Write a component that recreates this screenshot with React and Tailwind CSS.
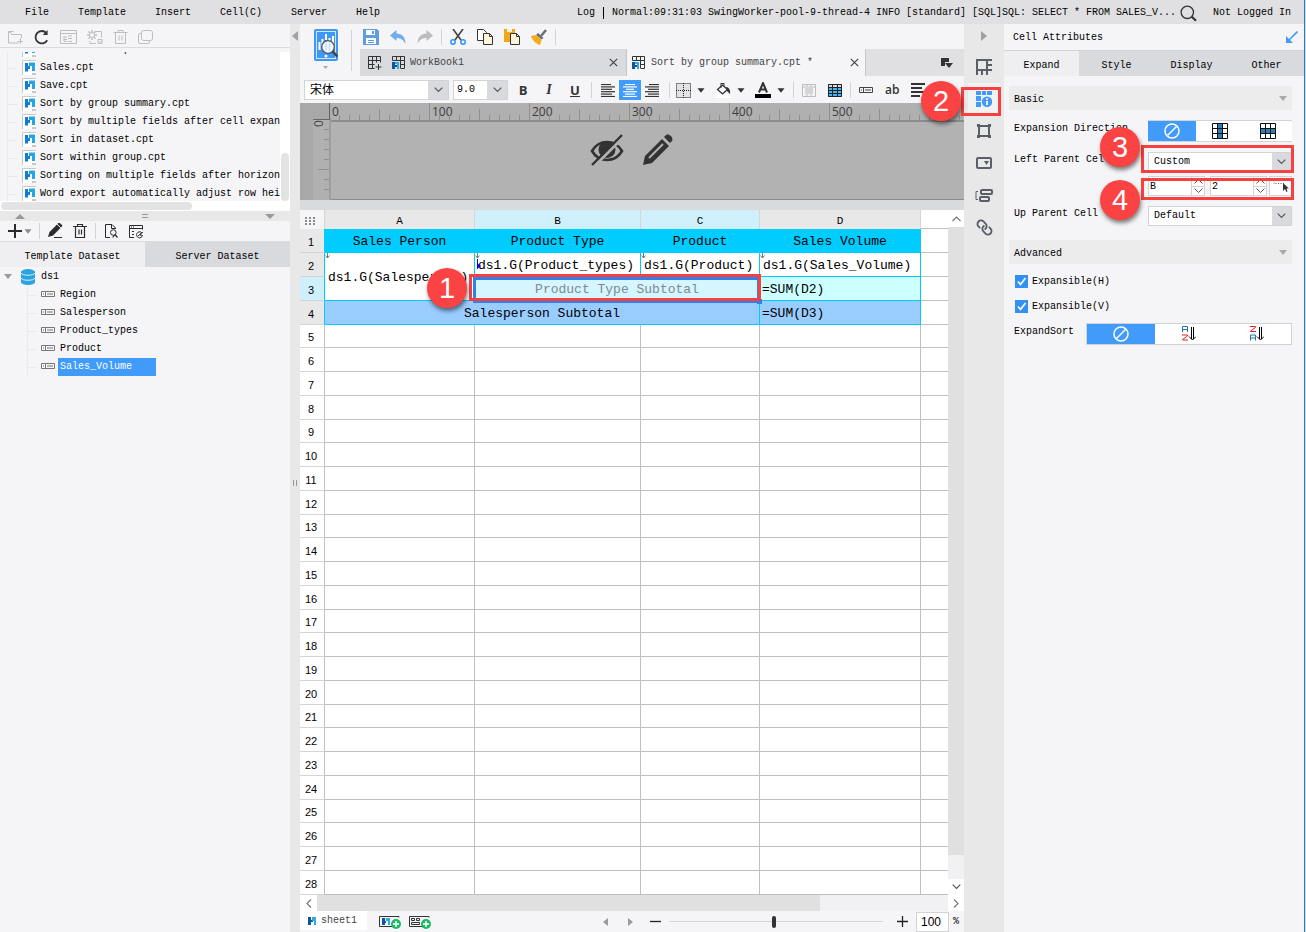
import { Fragment } from "react";
import { Link } from "lucide-react";

const mono = "font-['Liberation_Mono','Noto_Sans_CJK_SC',monospace]";

function Icon({ w = 16, h = 16, className = "", children }) {
  return (
    <svg width={w} height={h} viewBox={`0 0 ${w} ${h}`} fill="none" className={`shrink-0 ${className}`} aria-hidden="true">
      {children}
    </svg>
  );
}

const Chevron = () => (
  <Icon w={9} h={6}><path d="M.7.7 4.5 4.5 8.3.7" stroke="#555" strokeWidth="1.2" /></Icon>
);
const Caret = ({ color = "#333" }) => (
  <Icon w={8} h={5}><path d="M.5.3h7L4 4.7z" fill={color} /></Icon>
);
const Divider = ({ className = "h-4" }) => <span className={`w-px shrink-0 bg-[#d2d3d6] ${className}`} />;

function Badge({ n, className }) {
  return (
    <span className={`pointer-events-none absolute z-20 flex size-10 items-center justify-center rounded-full bg-[#fc4343] font-['Liberation_Sans',sans-serif] text-[29px] leading-none text-white shadow-[1px_3px_4px_rgba(0,0,0,0.5)] ${className}`}>
      {n}
    </span>
  );
}
const Frame = ({ className }) => (
  <span className={`pointer-events-none absolute z-10 border-3 border-[#fa3f3f] ${className}`} />
);

/* ---------- menu ---------- */
function MenuBar() {
  return (
    <header className="flex h-6 shrink-0 items-center overflow-hidden bg-[#e0e0e2] pt-0.5 pr-[13px] pl-[25px] whitespace-nowrap">
      <nav className="flex gap-[29px]">
        {["File", "Template", "Insert", "Cell(C)", "Server", "Help"].map((m) => (
          <button key={m}>{m}</button>
        ))}
      </nav>
      <div className="ml-auto flex items-center">
        <span>Log</span>
        <span className="mx-2 h-3 w-px bg-black" />
        <span>Normal:09:31:03 SwingWorker-pool-9-thread-4 INFO [standard] [SQL]SQL: SELECT * FROM SALES_V...</span>
        <button aria-label="Search" className="ml-1">
          <Icon w={17} h={17}>
            <circle cx="7.3" cy="7.3" r="6.2" stroke="#333" strokeWidth="1.3" />
            <path d="m11.8 11.8 4.2 4" stroke="#333" strokeWidth="2.2" />
          </Icon>
        </button>
        <button className="ml-4">Not Logged In</button>
      </div>
    </header>
  );
}

/* ---------- left panel ---------- */
const files = [
  "Out of order.cpt", "Sales.cpt", "Save.cpt", "Sort by group summary.cpt",
  "Sort by multiple fields after cell expansion.cpt", "Sort in dataset.cpt", "Sort within group.cpt",
  "Sorting on multiple fields after horizontal.cpt", "Word export automatically adjust row height.cpt",
];

const CptIcon = () => (
  <Icon w={14} h={15} className="mb-0.5">
    <path d="M0 0h14v15H0z" fill="#fff" />
    <path d="M.5 15V.5H14" stroke="#c8c8c8" />
    <path d="M10 13h4v2h-4z" fill="#c8c8c8" />
    <path d="M3 3h3v3h2v3H6v2.500H3z" fill="#0d7fd1" />
    <path d="M7 2.500h6V11h-3V6H7z" fill="#22a6e5" />
  </Icon>
);

function LeftPanel() {
  return (
    <aside className="flex w-[290px] shrink-0 flex-col">
      <div className="flex h-6 items-center border-b border-[#dcdcde] pl-2 [&>button]:mr-[10px] pt-0.5">
        <button aria-label="New folder"><Icon w={15}><path d="M10.500 14H.5V3.500h2l1 2h10V9M.5 3.500V2.500h5M12.500 9v6M9.500 12.500H15" stroke="#bdbdbf" /></Icon></button>
        <button aria-label="Refresh"><Icon w={17}><path d="M14.200 11.200A6.200 6.200 0 1 1 13.300 4" stroke="#333" strokeWidth="1.800" /><path d="M14.600 1v5H9.800z" fill="#333" /></Icon></button>
        <button aria-label="Details"><Icon w={17}><path d="M.5 1.500h16v13H.5zM.5 4.500h16M4 7v5.500h3M4 8h3M4 10.500h3M8 7h4M8 9.500h4M8 12.500h4" stroke="#bdbdbf" /></Icon></button>
        <button aria-label="Settings"><Icon><circle cx="5" cy="6" r="2.500" stroke="#bdbdbf" /><path d="M5 1v2M5 9v2M0 6h2M8 6h2M1.500 2.500 3 4M7 8l1.500 1.500M8.500 2.500 7 4M3 8 1.500 9.500" stroke="#bdbdbf" strokeWidth="1.500" /><path d="M8 2.500h6.500v6M3 12v2.500h6M11 10.500h4v4h-4zM12 12.500l1 1 2-2" stroke="#bdbdbf" /></Icon></button>
        <button aria-label="Delete"><Icon w={15}><path d="M.5 3.500h14M5 3.500v-2h5v2M2.500 3.500v11h10v-11M6 6.500v5M9 6.500v5" stroke="#bdbdbf" /></Icon></button>
        <button aria-label="Copy"><Icon w={15}><rect x="3.500" y="1.500" width="11" height="10" rx="2" stroke="#bdbdbf" /><path d="M3 4.500H2a1.500 1.500 0 0 0-1.500 1.500v7A1.500 1.500 0 0 0 2 14.500h8a1.500 1.500 0 0 0 1.500-1.500v-1" stroke="#bdbdbf" /></Icon></button>
      </div>
      <div className="mt-1 flex h-[149px]">
        <ul className="flex w-[280px] flex-col overflow-hidden [&>li:first-child]:-mt-[11px]">
          {files.map((f) => (
            <li key={f} className="ml-[7px] flex h-[18px] shrink-0 items-center border-l border-[#ebebed] whitespace-nowrap">
              <span className="mr-[5px] h-px w-[9px] shrink-0 bg-[#e9e9eb]" />
              <CptIcon />
              <span className="ml-1">{f}</span>
            </li>
          ))}
        </ul>
        <div className="flex flex-1 items-end bg-white">
          <span className="ml-px h-12 w-2 rounded-sm bg-[#e3e3e4]" />
        </div>
      </div>
      <div className="flex h-[10px] items-center bg-white pl-px">
        <span className="h-2 w-[191px] rounded-sm bg-[#e3e3e4]" />
      </div>
      <div className="flex h-[10px] items-center justify-between bg-[#e8e8e9] px-[15px]">
        <Icon w={10} h={5}><path d="M0 5h10L5 0z" fill="#999" /></Icon>
        <Icon w={6} h={4}><path d="M0 .5h6M0 3.500h6" stroke="#999" /></Icon>
        <Icon w={10} h={5}><path d="M0 0h10L5 5z" fill="#999" /></Icon>
      </div>
      <div className="flex h-[21px] items-center border-b border-[#dcdcde] pl-2">
        <button aria-label="Add" className="flex items-center gap-[2px]">
          <Icon w={14} h={14}><path d="M7 0v14M0 7h14" stroke="#2b2b2b" strokeWidth="2" /></Icon>
          <Caret color="#8b8b8b" />
        </button>
        <Divider className="mx-[7px] h-4" />
        <button aria-label="Edit"><Icon><path d="M1 14l1.500-5L10 1.500 13.500 5 6 12.500z" fill="#2b2b2b" /><path d="M11 .8l1.200-.8L15 2.500 14 4zM7 14.500h8" fill="#2b2b2b" stroke="#2b2b2b" /></Icon></button>
        <button aria-label="Delete" className="ml-[9px]"><Icon><path d="M1 3.500h14M5.500 3.500v-2h5v2M3.500 3.500v11h9v-11M7 6.500v5M9.500 6.500v5" stroke="#2b2b2b" strokeWidth="1.200" /></Icon></button>
        <Divider className="mx-[7px] h-4" />
        <button aria-label="Preview"><Icon><path d="M7 14.500H2.500v-13H9l3.500 3.500v1M8.500 1.500v4h4" stroke="#2b2b2b" /><circle cx="10.300" cy="9.500" r="2.800" stroke="#2b2b2b" /><path d="m11.500 12-1.800 2.500M12 11.500l2.500 3" stroke="#2b2b2b" strokeWidth="1.200" /></Icon></button>
        <button aria-label="Edit source" className="ml-[9px]"><Icon><path d="M6 14.500H1.500v-12h13v4M1.500 5.500h13M3 4h1M5 4h1M4 8.500h2M4 11.500h2" stroke="#2b2b2b" /><path d="M13.500 9.500a3 3 0 1 0 1 3L12 12zM10 13l5-4" stroke="#2b2b2b" /></Icon></button>
      </div>
      <div className="grid h-[25px] grid-cols-2">
        <button className="bg-[#efeff1] pt-1">Template Dataset</button>
        <button className="bg-[#d9dadd] pt-1">Server Dataset</button>
      </div>
      <div className="flex h-[19px] items-center pl-[4px]">
        <Icon w={8} h={5}><path d="M0 0h8L4 5z" fill="#999" /></Icon>
        <Icon w={14} h={16} className="ml-[9px]">
          <path d="M0 3v10c0 4 14 4 14 0V3z" fill="#2ba3e0" /><ellipse cx="7" cy="3" rx="7" ry="3" fill="#2ba3e0" />
          <path d="M0 4c1 3 13 3 14 0M0 9c1 3 13 3 14 0" stroke="#d9effa" />
        </Icon>
        <span className="ml-[6px]">ds1</span>
      </div>
      <ul>
        {["Region", "Salesperson", "Product_types", "Product", "Sales_Volume"].map((f) => (
          <li key={f} className="ml-[27px] flex h-[18px] items-center border-l border-[#ebebed]">
            <span className="mr-1 h-px w-[9px] bg-[#e9e9eb]" />
            <Icon w={14} h={6} className="mb-0.5"><path d="M.5.5h13v5H.500zM4.500.5v5M6 3h6M2 3h1" stroke="#777" /></Icon>
            <span className={f === "Sales_Volume" ? "ml-[3px] h-[18px] w-[98px] bg-[#409bfa] pl-0.5 leading-[18px] text-white" : "ml-[5px]"}>{f}</span>
          </li>
        ))}
      </ul>
    </aside>
  );
}

/* ---------- editor toolbars ---------- */
const BookIcon = () => (
  <Icon w={13} h={14}>
    <path d="M.5 4.500v-4h12v12H9M.5 4.500h12M4.500.5v4M8.500.5v12M8.500 8.500h4" stroke="#333" />
    <path d="M0 6h3v3h2v2H3v2H0z" fill="#0b57a0" /><path d="M3 6h4v7H5V8H3z" fill="#2fa8e4" />
  </Icon>
);
const Close = () => <Icon w={9} h={9}><path d="m.8.800 7.400 7.400M8.200.800.800 8.200" stroke="#444" strokeWidth="1.200" /></Icon>;

function TopTools() {
  return (
    <div className="flex h-[53px] shrink-0">
      <div className="flex w-[51px] flex-col items-center border-[#d2d3d6] pt-[5px]">
        <button aria-label="Preview" className="flex flex-col items-center gap-[5px]">
          <Icon w={24} h={32}>
            <rect width="24" height="32" rx="2" fill="#3f97f6" /><rect x="2.500" y="2.500" width="19" height="27" stroke="#cfe5fd" />
            <path d="M5.500 13v8M8.500 10v11M12 5v6M15.500 9v3M19 7v9" stroke="#fff" strokeWidth="2" />
            <circle cx="14" cy="18" r="6.300" fill="#f2f8ff" stroke="#555" strokeWidth="1.300" />
            <path d="M12 14v8M15.500 13.500v9" stroke="#c5dffc" strokeWidth="1.500" />
            <path d="m18.500 22.500 5 5" stroke="#444" strokeWidth="2.500" /><circle cx="12" cy="27" r="1.500" fill="#fff" />
          </Icon>
          <Icon w={5} h={3}><path d="M0 0h5L2.500 3z" fill="#aaa" /></Icon>
        </button>
      </div>
      <Divider className="mt-[6px] h-[41px]" />
      <div className="flex min-w-0 flex-1 flex-col pl-2">
        <div className="flex h-[25px] items-center gap-[11px] pl-[3px]">
          <button aria-label="Save"><Icon><path d="M0 0h14l2 2v14H0z" fill="#5f9fe0" /><path d="M3 1h9v5H3zM3 9h10v6H3z" fill="#fff" /><path d="M9 2h2v3H9z" fill="#5f9fe0" /><path d="M5 11.500h6M5 13.500h6" stroke="#5f9fe0" /></Icon></button>
          <button aria-label="Undo"><Icon><path d="M0 6.500 6.500 1v3.500C12 4.500 15.500 8 15.500 15c-2-4-4.500-6-9-6v3z" fill="#6facea" /></Icon></button>
          <button aria-label="Redo"><Icon><path d="M16 6.500 9.500 1v3.500C4 4.500.5 8 .5 15c2-4 4.500-6 9-6v3z" fill="#bcbcbe" /></Icon></button>
          <Divider className="-mx-[3px] h-4" />
          <button aria-label="Cut"><Icon><path d="m3 0 8 11M13 0 5 11" stroke="#444" strokeWidth="1.600" /><circle cx="3" cy="13" r="2.200" stroke="#2f95f5" strokeWidth="1.500" /><circle cx="13" cy="13" r="2.200" stroke="#2f95f5" strokeWidth="1.500" /></Icon></button>
          <button aria-label="Copy"><Icon><path d="M.5.500h6l3 3v8h-9z" fill="#fff" stroke="#333" /><path d="M6.500 4.500h6l3 3v8h-9z" fill="#fdf4dc" stroke="#333" /><path d="M12.500 4.500v3h3" stroke="#333" /></Icon></button>
          <button aria-label="Paste"><Icon><path d="M0 0h11v13H0z" fill="#f0a818" /><path d="M3 0h5v3H3z" fill="#fff2d0" /><path d="M6.500 4.500h6l3 3v8h-9z" fill="#fdf4dc" stroke="#333" /><path d="M12.500 4.500v3h3" stroke="#333" /></Icon></button>
          <button aria-label="Format painter"><Icon><path d="m15 1-5 6" stroke="#6a6f7d" strokeWidth="2.500" /><path d="m7 4 5.500 5-2 1.500L5 6z" fill="#6a6f7d" /><path d="m5 6 5.500 5L9 16C5 15 1 11 0 7z" fill="#f5ac1b" /></Icon></button>
          <Divider className="-ml-[3px] h-4" />
        </div>
        <div className="flex h-[27px] items-stretch bg-[#e0e0e2] text-[#444]">
          <button aria-label="New workbook" className="flex w-[26px] items-center justify-center bg-[#d9dadd] pl-1">
            <Icon w={14} h={14}><path d="M.5.500h12v6M.5.500v12h6M.5 4.500h12M.5 8.500h6M4.500.500v12M8.500.500v6M10.500 8v6M7.500 11h6" stroke="#333" /></Icon>
          </button>
          <div className="flex w-60 items-center bg-[#dadbde] pl-[6px] pr-2">
            <BookIcon /><button className="ml-[5px] pt-px">WorkBook1</button>
            <button aria-label="Close WorkBook1" className="ml-auto"><Close /></button>
          </div>
          <div className="flex w-60 items-center border-x border-[#c6c7ca] bg-[#f5f5f7] pl-[5px] pr-[6px]">
            <BookIcon /><button className="ml-[6px] pt-px">Sort by group summary.cpt *</button>
            <button aria-label="Close Sort by group summary" className="ml-auto"><Close /></button>
          </div>
          <button aria-label="Tab list" className="ml-auto pr-[11px]">
            <Icon w={12} h={10}><path d="M0 0h8v4H4v4H0z" fill="#333" /><path d="M4 5h8l-4 5z" fill="#333" /></Icon>
          </button>
        </div>
      </div>
    </div>
  );
}

const Lines = ({ xs, color = "#333" }) => (
  <Icon w={15} h={13}>
    {xs.map(([a, b], i) => <path key={i} d={`M${a} ${i * 2.4 + 0.5}H${b}`} stroke={color} strokeWidth="1.200" />)}
  </Icon>
);

function FormatBar() {
  const btn = "flex h-5 w-[22px] shrink-0 items-center justify-center";
  return (
    <div className="flex h-[26px] shrink-0 items-center overflow-hidden pl-1 text-[#333]">
      <div className="flex h-5 w-[145px] shrink-0 border border-[#d2d3d6]">
        <select aria-label="Font" className="min-w-0 flex-1 appearance-none bg-white pt-0.5 pl-[5px] text-xs text-black"><option>宋体</option></select>
        <span className="flex w-5 items-center justify-center bg-[#d9dadd]"><Chevron /></span>
      </div>
      <div className="ml-1 flex h-5 w-[55px] shrink-0 border border-[#d2d3d6]">
        <select aria-label="Font size" className="min-w-0 flex-1 appearance-none bg-white pl-[3px] text-black"><option>9.0</option></select>
        <span className="flex w-5 items-center justify-center bg-[#d9dadd]"><Chevron /></span>
      </div>
      <div className="ml-1 flex gap-1 font-['Open_Sans',sans-serif] text-[13px] leading-none font-bold">
        <button className={btn}>B</button>
        <button className={`${btn} font-['Liberation_Serif',serif] text-sm italic`}>I</button>
        <button className={`${btn} underline`}>U</button>
      </div>
      <Divider className="mx-[5px] h-4" />
      <button aria-label="Align left" className={btn}><Lines xs={[[0, 10], [0, 14], [0, 11], [0, 14], [0, 11], [0, 14]]} /></button>
      <button aria-label="Align center" className={`${btn} bg-[#409bfa]`}><Lines color="#fff" xs={[[2, 12], [0, 14], [3, 11], [0, 14], [2, 12], [0, 14]]} /></button>
      <button aria-label="Align right" className={btn}><Lines xs={[[4, 14], [0, 14], [3, 14], [0, 14], [3, 14], [0, 14]]} /></button>
      <Divider className="ml-[6px] h-4" />
      <button aria-label="Borders" className="ml-[6px] flex items-center gap-[6px]">
        <Icon w={15} h={15}><path d="M0 0h15v15H0z" fill="#e2e2e4" /><path d="M.5.500h14v14H.500zM7.500 0v15M0 7.500h15" stroke="#222" strokeDasharray="1 1" /></Icon><Caret />
      </button>
      <button aria-label="Fill colour" className="ml-[11px] flex items-center gap-[6px]">
        <Icon w={15} h={16}><path d="M0 12h15v4H0z" fill="#fff" /><path d="m1.500 7.500 5-4.500 5 4.500-5 4.500z" stroke="#333" strokeWidth="1.300" /><path d="M5 1v5M5 1.500h3v3" stroke="#333" /><path d="M10 5c3 0 4.500 3 4 7l-3-3z" fill="#333" /></Icon><Caret />
      </button>
      <button aria-label="Text colour" className="ml-[10px] flex items-center gap-[6px]">
        <Icon w={16} h={16}><path d="M0 12h16v4H0z" fill="#000" /><path d="m4 10.500 4-9.500 4 9.500M5.500 7.500h5" stroke="#333" strokeWidth="2" /></Icon><Caret />
      </button>
      <Divider className="mx-2 h-4" />
      <button aria-label="Merge cells"><Icon w={14} h={13}><path d="M.5.500h13v12H.500zM.5 3h13M5 .5v2M9 .5v2M5 10v2M9 10v2" stroke="#bdbdbf" /><path d="M3 4h8v6H3z" fill="#d5d5d7" /></Icon></button>
      <button aria-label="Table style" className="ml-3"><Icon w={14} h={13}><path d="M0 0h14v13H0z" fill="#45b5f5" /><path d="M0 0h14v3H0z" fill="#ddd" /><path d="M.5.500h13v12H.500zM.5 3.500h13M.5 6.500h13M.5 9.500h13M4.500 0v13M9.500 0v13" stroke="#222" /></Icon></button>
      <Divider className="mx-2 h-4" />
      <button aria-label="Insert column"><Icon w={14} h={6}><path d="M.5.500h13v5H.500zM4.500.500v5M6 3h6M2 3h1" stroke="#444" /></Icon></button>
      <button className="ml-3 font-['Open_Sans',sans-serif] text-xs font-semibold">ab</button>
      <button aria-label="Rich text" className="ml-3"><Icon w={14} h={14}><path d="M0 1h14M0 5h11M0 9h14M0 13h9" stroke="#333" strokeWidth="1.800" /></Icon></button>
    </div>
  );
}

function Ruler() {
  const ticks = Array.from({ length: 64 }, (_, i) => i);
  return (
    <div className="flex h-[97px] shrink-0 bg-[#a8a8a8]">
      <svg width="31" height="97" viewBox="0 0 31 97" className="shrink-0" fill="none">
        <path d="M13 17h18v80H13z" fill="#b0b0b0" />
        <path d="M13 16.500h17.500M29.500 0v16" stroke="#666" />
        <path d="M30 17v80" stroke="#8c8c8c" />
        <path d="M24 26.500h5M24 36.500h5M24 46.500h5M24 56.500h5M18 66.500h11M24 76.500h5M24 86.500h5" stroke="#8f8f8f" />
        <text transform="translate(23 24) rotate(-90)" fontFamily="Open Sans" fontSize="12" fill="#444">0</text>
      </svg>
      <div className="flex min-w-0 flex-1 flex-col">
        <svg width="100%" height="17" className="shrink-0 bg-[#b0b0b0]" fill="none">
          {ticks.map((i) => (
            <Fragment key={i}>
              <path d={`M${i * 10 - 1.5} ${i % 10 === 0 ? 0 : i % 5 === 0 ? 6 : 12}V17`} stroke="#8f8f8f" />
              {i % 10 === 0 && <text x={i * 10 + 1} y="13" fontFamily="Open Sans" fontSize="12" fill="#3c3c3c">{i * 10}</text>}
            </Fragment>
          ))}
        </svg>
        <div className="flex flex-1 items-start justify-center gap-[18px] border-t-2 border-b border-[#8c8c8c] bg-[#b2b2b2] pt-3 pr-8">
          <button aria-label="Hide">
            <Icon w={34} h={32}>
              <path d="M2 17C9 5 25 5 32 17 25 29 9 29 2 17z" stroke="#333" strokeWidth="2.600" />
              <circle cx="17" cy="15.500" r="8.500" fill="#333" />
              <path d="M3.500 33 33.500 3" stroke="#b2b2b2" strokeWidth="3" /><path d="M2 31 32 1" stroke="#333" strokeWidth="2.400" />
            </Icon>
          </button>
          <button aria-label="Edit">
            <Icon w={32} h={32}>
              <path d="M1 31 3 22 20 5l7 7L10 29z" fill="#333" /><path d="m7 24 14-14" stroke="#b2b2b2" strokeWidth="2" />
              <path d="m22 3 2-2c3-2 8 3 6 6l-2 2z" fill="#333" />
            </Icon>
          </button>
        </div>
      </div>
    </div>
  );
}

/* ---------- sheet ---------- */
const Flow = () => (
  <Icon w={5} h={6} className="absolute top-0 left-0"><path d="M2.500 0v5M.5 2.500l2 2.500 2-2.500" stroke="#777" /></Icon>
);
const cell = "relative border-r border-b p-0 pt-[3px] whitespace-nowrap text-[13px] leading-4";
const grey = "border-[#bfbfbf]";
const cyan = "border-[#00ccff]";

function RowCells({ r }) {
  if (r === 1)
    return ["Sales Person", "Product Type", "Product", "Sales Volume"].map((t) => (
      <td key={t} className={`${cell} ${cyan} bg-[#00ccff] text-center`}>{t}</td>
    ));
  if (r === 2)
    return (
      <>
        <td rowSpan={2} className={`${cell} ${cyan} pl-[3px]`}><Flow />ds1.G(Salesperson)</td>
        <td className={`${cell} ${cyan} pl-[3px]`}>
          <Flow />
          <Icon w={5} h={10} className="absolute top-[6px] left-px"><path d="M1.500 0v10" stroke="#00f" /><path d="M1 4l4 3-4 3z" fill="#00f" /></Icon>
          ds1.G(Product_types)
        </td>
        <td className={`${cell} ${cyan} pl-[3px]`}><Flow />ds1.G(Product)</td>
        <td className={`${cell} ${cyan} pl-[3px]`}><Flow />ds1.G(Sales_Volume)</td>
      </>
    );
  if (r === 3)
    return (
      <>
        <td colSpan={2} className={`${cell} ${cyan} bg-[#d5f5ff] text-center text-[#7b8b90]`}>
          Product Type Subtotal
          <span className="absolute top-0 -right-px -bottom-[3px] -left-0.5 z-10 border-3 border-[#2f80ed]" />
          <span className="absolute -right-[3px] -bottom-1 z-10 size-[5px] bg-[#2f80ed]" />
          <Frame className="-top-[3px] -right-[2px] bottom-[-1px] -left-[6px]" />
          <Badge n="1" className="-top-[9px] -left-12" />
        </td>
        <td className={`${cell} ${cyan} bg-[#ccffff] pl-[2px]`}>=SUM(D2)</td>
      </>
    );
  if (r === 4)
    return (
      <>
        <td colSpan={3} className={`${cell} ${cyan} bg-[#99ccff] text-center`}>Salesperson Subtotal</td>
        <td className={`${cell} ${cyan} bg-[#99ccff] pl-[2px]`}>=SUM(D3)</td>
      </>
    );
  return [0, 1, 2, 3].map((i) => <td key={i} className={`${cell} ${grey}`} />);
}

function Sheet() {
  const head = "h-[19px] border-r border-[#d5d5d7] p-0 pt-0.5 text-[11px] leading-4 font-normal";
  return (
    <div className="flex shrink-0">
      <table className="min-w-0 flex-1 table-fixed border-separate border-spacing-0 bg-white">
        <colgroup>
          <col className="w-[25px]" /><col className="w-[150px]" /><col className="w-[166px]" />
          <col className="w-[119px]" /><col className="w-[161px]" /><col />
        </colgroup>
        <thead>
          <tr>
            <th aria-label="Select all" className={`${head} bg-[#f5f5f7]`}>
              <Icon w={10} h={8} className="ml-[5px]"><path d="M0 1h10M0 4h10M0 7h10" stroke="#8b8b8b" strokeWidth="2" strokeDasharray="2 2" /></Icon>
            </th>
            <th className={`${head} bg-[#e8e8e8]`}>A</th>
            <th className={`${head} bg-[#cff0fb]`}>B</th>
            <th className={`${head} bg-[#cff0fb]`}>C</th>
            <th className={`${head} bg-[#e8e8e8]`}>D</th>
            <th className="border-b border-[#bfbfbf] p-0" />
          </tr>
        </thead>
        <tbody>
          {Array.from({ length: 28 }, (_, i) => i + 1).map((r) => (
            <tr key={r}>
              <th className={`border-r border-b p-0 pt-0.5 pr-0.5 text-center font-['Liberation_Sans',sans-serif] text-[11px] leading-4 font-normal ${r > 4 && r % 4 === 1 ? "h-[23px]" : "h-6"} ${r <= 4 ? "border-r-[#00ccff]" : "border-r-[#bfbfbf]"} border-b-[#d5d5d7] ${r === 3 ? "bg-[#cff0fb]" : r < 5 ? "bg-[#e8e8e8]" : "bg-white"}`}>{r}</th>
              <RowCells r={r} />
              <td className={`border-b ${grey} p-0`} />
            </tr>
          ))}
        </tbody>
      </table>
      <div className="flex w-4 flex-col bg-[#f1f1f3]">
        <button aria-label="Scroll up" className="flex h-[17px] items-center justify-center bg-white"><Icon w={9} h={6}><path d="M.5 5 4.500 1l4 4" stroke="#777" strokeWidth="1.200" /></Icon></button>
        <span className="h-[628px] bg-[#e0e0e0]" />
        <button aria-label="Scroll down" className="mt-auto flex h-4 items-center justify-center bg-white"><Chevron /></button>
      </div>
    </div>
  );
}

const PlusDot = () => <><circle cx="17" cy="9" r="5" fill="#1fb864" /><path d="M17 6v6M14 9h6" stroke="#fff" strokeWidth="1.400" /></>;

function StatusBar() {
  return (
    <>
      <div className="flex h-4 shrink-0 bg-[#f1f1f3]">
        <button aria-label="Scroll left" className="flex w-[17px] items-center justify-center bg-white"><Icon w={6} h={9}><path d="M5 .5 1 4.500l4 4" stroke="#777" strokeWidth="1.200" /></Icon></button>
        <span className="w-[503px] bg-[#e0e0e0]" />
        <button aria-label="Scroll right" className="ml-auto flex w-4 items-center justify-center bg-white"><Icon w={6} h={9}><path d="m1 .5 4 4-4 4" stroke="#777" strokeWidth="1.200" /></Icon></button>
      </div>
      <div className="flex h-[21px] shrink-0 items-center">
        <button className="flex h-[19px] w-[67px] items-center gap-[5px] self-start bg-white pl-2 text-[#444]">
          <Icon w={8} h={8}><path d="M0 0h3v3h2v2H3v3H0z" fill="#0b57a0" /><path d="M4 0h4v8H6V4H4z" fill="#2fa8e4" /></Icon>
          sheet1
        </button>
        <button aria-label="Add sheet" className="ml-3"><Icon w={22} h={14}><path d="M20 2.500V1.500H.500v10H13" stroke="#333" /><path d="M3 3h3v3h1v2H6v2H3z" fill="#0b57a0" /><path d="M7 3h4v7H9V6H7z" fill="#2fa8e4" /><PlusDot /></Icon></button>
        <button aria-label="Add form" className="ml-2"><Icon w={22} h={14}><path d="M20 2.500V1.500H.500v10H13M2.500 3.500h3v2h-3zM7.500 3.500h3v2h-3zM2.500 7.500h8v2h-8z" stroke="#333" /><PlusDot /></Icon></button>
        <button aria-label="Previous" className="ml-auto"><Icon w={5} h={8}><path d="M5 0v8L0 4z" fill="#999" /></Icon></button>
        <button aria-label="Next" className="ml-5"><Icon w={5} h={8}><path d="M0 0v8l5-4z" fill="#999" /></Icon></button>
        <button aria-label="Zoom out" className="ml-[17px]"><Icon w={11} h={11}><path d="M0 5.500h11" stroke="#222" strokeWidth="1.300" /></Icon></button>
        <input type="range" aria-label="Zoom" min="0" max="100" defaultValue="49" className="ml-2 h-3 w-[214px] appearance-none bg-[linear-gradient(#d5d5d7,#d5d5d7)] bg-[length:100%_1px] bg-center bg-no-repeat [&::-webkit-slider-thumb]:h-3 [&::-webkit-slider-thumb]:w-1 [&::-webkit-slider-thumb]:appearance-none [&::-webkit-slider-thumb]:rounded-xs [&::-webkit-slider-thumb]:bg-[#333]" />
        <button aria-label="Zoom in" className="ml-[14px]"><Icon w={11} h={11}><path d="M0 5.500h11M5.500 0v11" stroke="#222" strokeWidth="1.300" /></Icon></button>
        <input aria-label="Zoom percent" defaultValue="100" className="ml-2 h-5 w-[33px] border border-[#d2d3d6] bg-white pl-1 font-['Liberation_Sans',sans-serif] text-xs" />
        <span className="ml-1 mr-[5px]">%</span>
      </div>
    </>
  );
}

/* ---------- right side ---------- */
function Strip() {
  const b = "flex h-8 w-8 items-center justify-center";
  const s = { stroke: "#5b5e66", strokeWidth: 2 };
  return (
    <div className="relative flex w-10 shrink-0 flex-col items-center bg-[#e8e8e9]">
      <button aria-label="Collapse" className="flex h-[27px] items-center pb-1"><Icon w={6} h={10}><path d="M0 0v10l6-5z" fill="#a0a0a2" /></Icon></button>
      <button aria-label="Cell elements" className={b}><Icon><path d="M0 1h16M1 0v16M0 11h16M11 0v16M11 6h5M6 11v5" {...s} /></Icon></button>
      <button aria-label="Cell attributes" className={`${b} bg-[#f2f2f3]`}>
        <Icon><path d="M0 0h5v4H0zM6 0h4v4H6zM11 0h5v4h-5zM0 5h5v5H0zM0 11h5v5H0z" fill="#409bfa" /><circle cx="11" cy="10.800" r="5.800" fill="#f2f2f3" /><circle cx="11" cy="10.800" r="5.200" fill="#409bfa" /><path d="M11 7.300V9M11 10v4" stroke="#fff" strokeWidth="1.800" /></Icon>
      </button>
      <button aria-label="Float element" className={b}><Icon><path d="M3 3h10v10H3z" {...s} /><path d="M1 1h3v3H1zM12 1h3v3h-3zM1 12h3v3H1zM12 12h3v3h-3z" fill="#5b5e66" /></Icon></button>
      <button aria-label="Widget settings" className={b}><Icon h={12}><rect x="1" y="1" width="14" height="10" rx="1" {...s} /><path d="M8 4h5l-2.500 4z" fill="#5b5e66" /></Icon></button>
      <button aria-label="Condition attributes" className={b}><Icon w={18} h={13}><path d="M3 2.500H1v8h2" stroke="#5b5e66" /><rect x="6" y="1" width="11" height="4" rx="1" {...s} /><rect x="5" y="8" width="9" height="4" rx="1" {...s} /></Icon></button>
      <button aria-label="Hyperlink" className={b}><Link className="rotate-90" size={17} strokeWidth={2.6} color="#5b5e66" /></button>
      <Frame className="top-[63px] -left-[3px] h-[29px] w-10" />
      <Badge n="2" className="top-[57px] -left-[43px]" />
    </div>
  );
}

const NoneIcon = () => <Icon><circle cx="8" cy="8" r="7" stroke="#fff" strokeWidth="1.500" /><path d="m3.500 12.500 9-9" stroke="#fff" strokeWidth="1.500" /></Icon>;

function SortIcon({ flip }) {
  const a = "M.5 6V.5h5V6M.5 3.500h5";
  const z = "M0 .5h5.500v1L.5 5v.5H6";
  return (
    <Icon w={14}>
      <path d={flip ? z : a} stroke={flip ? "#e02020" : "#2474ab"} />
      <path d={flip ? a : z} transform="translate(0 8.500)" stroke={flip ? "#2474ab" : "#e02020"} />
      <path d="M9.500 1v12M11.500 1v12M7 10.500l3.500 3.500 3.500-3.500" stroke="#000" />
    </Icon>
  );
}

const GridIcon = ({ v }) => (
  <Icon>
    <path d={v ? "M5 0h6v16H5z" : "M0 5h16v6H0z"} fill="#2f7fb5" />
    <path d="M.5.500h15v15H.500zM5.500 0v16M10.500 0v16M0 5.500h16M0 10.500h16" stroke="#111" />
  </Icon>
);

function Section({ children }) {
  return (
    <button className="flex h-6 w-full items-center justify-between bg-[#ececed] pr-[5px] pl-[5px] text-left">
      <span className="pt-1">{children}</span><Icon w={8} h={5}><path d="M0 0h8L4 5z" fill="#aaa" /></Icon>
    </button>
  );
}

function Pick({ id, value }) {
  return (
    <div className="flex h-5 w-36 border border-[#d2d3d6]">
      <select id={id} className="min-w-0 flex-1 appearance-none bg-white pl-[5px]"><option>{value}</option></select>
      <span className="flex w-[19px] items-center justify-center bg-[#d9dadd]"><Chevron /></span>
    </div>
  );
}

function Spin({ label, value, className }) {
  return (
    <div className={`flex h-5 border border-[#d2d3d6] bg-white ${className}`}>
      <input aria-label={label} defaultValue={value} className="h-[18px] min-w-0 flex-1 pl-px" />
      <span className="flex w-[13px] flex-col border-l border-[#d2d3d6]">
        <button aria-label={`${label} up`} className="flex flex-1 items-center justify-center border-b border-[#d2d3d6]"><Icon w={9} h={5}><path d="m.5 4.500 4-4 4 4" stroke="#555" /></Icon></button>
        <button aria-label={`${label} down`} className="flex flex-1 items-center justify-center"><Icon w={9} h={5}><path d="m.5.500 4 4 4-4" stroke="#555" /></Icon></button>
      </span>
    </div>
  );
}

function Attributes() {
  return (
    <aside className="w-[300px] shrink-0">
      <div className="flex h-[26px] items-center justify-between pr-[6px] pl-[9px]">
        <h2 className="pt-0.5">Cell Attributes</h2>
        <button aria-label="Dock"><Icon w={12} h={12}><path d="M11.500.500 3 9" stroke="#409bfa" strokeWidth="1.600" /><path d="M0 5v7h7z" fill="#409bfa" /></Icon></button>
      </div>
      <div className="grid h-[26px] grid-cols-4">
        {["Expand", "Style", "Display", "Other"].map((t, i) => (
          <button key={t} className={`border-t border-[#d2d3d6] pt-1 ${i ? "bg-[#d9dadd]" : "bg-[#efeff1]"}`}>{t}</button>
        ))}
      </div>
      <div className="relative pt-[10px] pr-3 pl-[5px]">
        <Section>Basic</Section>
        <div className="mt-[10px] flex flex-col gap-[10px] pl-[5px] [&>div]:flex [&>div]:items-center [&>div]:justify-between">
          <div className="h-[22px]">
            <span className="mb-1">Expansion Direction</span>
            <div className="grid h-[22px] w-36 grid-cols-3 border-y border-[#d2d3d6] bg-white [&>button]:flex [&>button]:items-center [&>button]:justify-center">
              <button aria-label="No expansion" className="bg-[#409bfa]"><NoneIcon /></button>
              <button aria-label="Vertical"><GridIcon v /></button>
              <button aria-label="Horizontal"><GridIcon /></button>
            </div>
          </div>
          <div className="h-5"><label htmlFor="lp" className="mb-1">Left Parent Cell</label><Pick id="lp" value="Custom" /></div>
        </div>
        <div className="mt-1 ml-[139px] flex">
          <Spin label="Parent column" value="B" className="w-[57px]" />
          <Spin label="Parent row" value="2" className="ml-[5px] w-[57px]" />
          <button aria-label="Select cell" className="ml-[2px] flex h-5 w-[23px] items-center justify-center border border-[#d2d3d6] bg-white">
            <Icon w={16} h={12}><path d="M1 0v3.500h10" stroke="#555" strokeDasharray="1 1.500" /><path d="M10 3v8l2-2 1.500 3 1-.5L13.500 8.500H16z" fill="#333" /></Icon>
          </button>
        </div>
        <div className="mt-[10px] flex h-5 items-center justify-between pl-[5px]">
          <label htmlFor="up" className="mb-1">Up Parent Cell</label><Pick id="up" value="Default" />
        </div>
        <Frame className="top-[69px] left-[137px] h-7 w-[153px]" />
        <Frame className="top-[102px] left-[137px] h-[22px] w-[153px]" />
        <Badge n="3" className="top-[51px] left-24" />
        <Badge n="4" className="top-[104px] left-24" />
        <div className="mt-[14px]"><Section>Advanced</Section></div>
        <div className="mt-[10px] flex flex-col gap-[11px] pl-[6px]">
          {["H", "V"].map((k) => (
            <label key={k} className="flex h-[14px] items-center gap-1">
              <span className="relative size-[13px]">
                <input type="checkbox" defaultChecked className="peer block size-[13px] appearance-none bg-white checked:bg-[#3390f3]" />
                <Icon w={13} h={13} className="pointer-events-none absolute top-0 left-0"><path d="m3 6.500 2.500 3L10.500 3" stroke="#fff" strokeWidth="1.700" /></Icon>
              </span>
              <span className="pt-px">Expansible({k})</span>
            </label>
          ))}
        </div>
        <div className="mt-[10px] flex items-center justify-between pl-[5px]">
          <span className="mb-1">ExpandSort</span>
          <div className="grid h-[22px] w-[206px] grid-cols-3 border border-[#d2d3d6] bg-white [&>button]:flex [&>button]:items-center [&>button]:justify-center">
            <button aria-label="No sort" className="bg-[#409bfa]"><NoneIcon /></button>
            <button aria-label="Ascending"><SortIcon /></button>
            <button aria-label="Descending"><SortIcon flip /></button>
          </div>
        </div>
      </div>
    </aside>
  );
}

export default function App() {
  return (
    <div className={`flex min-h-screen bg-[#f5f5f7] text-[10px] leading-4 text-black ${mono}`}>
      <div className="flex min-w-0 flex-1 flex-col">
        <MenuBar />
        <div className="flex flex-1">
          <LeftPanel />
          <div className="flex w-[10px] shrink-0 flex-col items-center bg-[#e8e8e9] pt-[7px]">
            <Icon w={6} h={10}><path d="M6 0v10L0 5z" fill="#a0a0a2" /></Icon>
            <span className="mt-[439px] h-[6px] w-1 border-x border-[#999]" />
          </div>
          <main className="flex min-w-0 flex-1 flex-col">
            <TopTools />
            <FormatBar />
            <Ruler />
            <div className="h-[10px] shrink-0 bg-[#d9dadc]" />
            <Sheet />
            <StatusBar />
          </main>
          <Strip />
          <Attributes />
        </div>
      </div>
      <div className="w-0.5 shrink-0 border-l border-[#1b7fd6] bg-[#d5dbe2]" />
    </div>
  );
}
